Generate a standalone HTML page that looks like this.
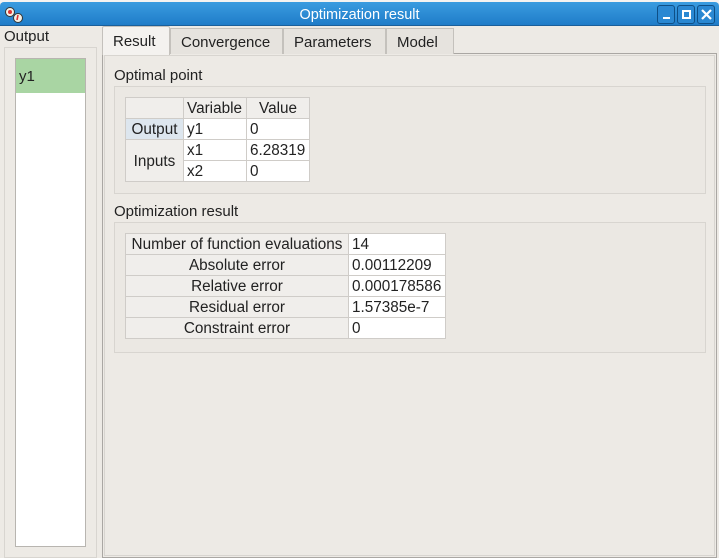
<!DOCTYPE html>
<html><head><meta charset="utf-8"><style>
*{box-sizing:border-box;margin:0;padding:0}
body{width:719px;height:558px;background:#edeae5;font-family:"Liberation Sans","DejaVu Sans",sans-serif;font-size:14.5px;color:#222;position:relative;overflow:hidden}
.a{position:absolute}
.t{position:absolute;white-space:nowrap}
table{border-collapse:collapse;position:absolute;background:#fff;font-size:15.3px}
td{border:1px solid #cfccc8;padding:2px 3px 0 3px;height:21px;line-height:18px;white-space:nowrap}
</style></head><body>
<div class="a" style="left:0;top:0;width:719px;height:3px;background:#f4f3f1"></div>
<div class="a" style="left:0;top:2px;width:719px;height:24px;background:linear-gradient(#3a9ce0,#1f7cc8);border-radius:4px 4px 0 0;border-bottom:1px solid #1a5f9a"></div>
<svg class="a" style="left:4px;top:6px" width="20" height="18"><circle cx="6" cy="6" r="4.5" fill="#f4f0e4" stroke="#333" stroke-width="1"/><circle cx="6" cy="6" r="2" fill="#d33"/><circle cx="14" cy="12" r="4.5" fill="#f4f0e4" stroke="#333" stroke-width="1"/><path d="M14 9 L13 14" stroke="#d33" stroke-width="1.6"/></svg>
<div class="t" style="left:0;width:719px;top:7px;text-align:center;color:#fff;font-size:14.5px">Optimization result</div>
<div class="a" style="left:657px;top:5px;width:18px;height:19px;border:1px solid #0e4f86;border-radius:3px;background:#2a88d2"><div class="a" style="left:5px;top:11px;width:7px;height:2px;background:#fff"></div></div>
<div class="a" style="left:677px;top:5px;width:18px;height:19px;border:1px solid #0e4f86;border-radius:3px;background:#2a88d2"><div class="a" style="left:4px;top:4px;width:9px;height:9px;border:2px solid #fff"></div></div>
<div class="a" style="left:697px;top:5px;width:18px;height:19px;border:1px solid #0e4f86;border-radius:3px;background:#2a88d2"><svg class="a" style="left:3px;top:3px" width="11" height="11"><path d="M1 1L10 10M10 1L1 10" stroke="#fff" stroke-width="2.2"/></svg></div>

<div class="t" style="left:4px;top:28px;font-size:15px">Output</div>
<div class="a" style="left:4px;top:47px;width:93px;height:511px;border:1px solid #d8d5d0"></div>
<div class="a" style="left:15px;top:58px;width:71px;height:489px;background:#fff;border:1px solid #b8b5b0"></div>
<div class="a" style="left:16px;top:59px;width:69px;height:34px;background:#a9d5a3"></div>
<div class="t" style="left:19px;top:68px;font-size:15px">y1</div>

<div class="a" style="left:102px;top:53px;width:615px;height:505px;border:1px solid #aaa7a3;background:#edeae5"><div class="a" style="left:1px;top:1px;right:1px;bottom:1px;border:1px solid #d8d5d0"></div></div>
<div class="a" style="left:170px;top:28px;width:113px;height:26px;border:1px solid #c4c1bc;border-bottom:none;background:#e6e3de"></div>
<div class="a" style="left:283px;top:28px;width:103px;height:26px;border:1px solid #c4c1bc;border-bottom:none;background:#e6e3de"></div>
<div class="a" style="left:386px;top:28px;width:68px;height:26px;border:1px solid #c4c1bc;border-bottom:none;background:#e6e3de"></div>
<div class="a" style="left:102px;top:26px;width:68px;height:29px;border:1px solid #c4c1bc;border-bottom:none;background:#f4f2ef;border-radius:2px 2px 0 0"></div>
<div class="t" style="left:113px;top:33px;font-size:15px">Result</div>
<div class="t" style="left:181px;top:34px;font-size:15px">Convergence</div>
<div class="t" style="left:294px;top:34px;font-size:15px">Parameters</div>
<div class="t" style="left:397px;top:34px;font-size:15px">Model</div>

<div class="t" style="left:114px;top:67px;font-size:15px">Optimal point</div>
<div class="a" style="left:114px;top:86px;width:592px;height:108px;border:1px solid #d8d5d0;background:#ebe8e3"></div>
<table style="left:125px;top:97px;border:1px solid #a8a5a1">
<tr><td style="width:58px;background:#f0eeeb"></td><td style="width:63px;background:#f0eeeb">Variable</td><td style="width:63px;background:#f0eeeb;text-align:center">Value</td></tr>
<tr><td style="background:#dde6ee;text-align:center">Output</td><td>y1</td><td>0</td></tr>
<tr><td rowspan="2" style="background:#f0eeeb;text-align:center">Inputs</td><td>x1</td><td>6.28319</td></tr>
<tr><td>x2</td><td>0</td></tr>
</table>

<div class="t" style="left:114px;top:203px;font-size:15px">Optimization result</div>
<div class="a" style="left:114px;top:222px;width:592px;height:131px;border:1px solid #d8d5d0;background:#ebe8e3"></div>
<table style="left:125px;top:233px;border:1px solid #a8a5a1">
<tr><td style="width:223px;background:#f0eeeb;text-align:center">Number of function evaluations</td><td style="width:97px">14</td></tr>
<tr><td style="background:#f0eeeb;text-align:center">Absolute error</td><td>0.00112209</td></tr>
<tr><td style="background:#f0eeeb;text-align:center">Relative error</td><td>0.000178586</td></tr>
<tr><td style="background:#f0eeeb;text-align:center">Residual error</td><td>1.57385e-7</td></tr>
<tr><td style="background:#f0eeeb;text-align:center">Constraint error</td><td>0</td></tr>
</table>
</body></html>
